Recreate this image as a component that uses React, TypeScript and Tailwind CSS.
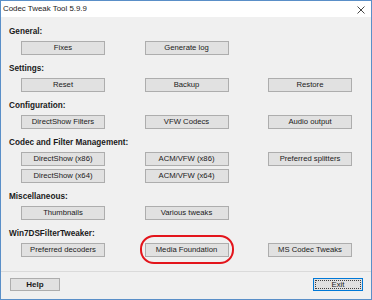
import React from 'react';

const font = { fontFamily: '"Liberation Sans", Arial, sans-serif' };

function Btn({ label, circled }: { label: string; circled?: boolean }) {
  return (
    <div className="relative">
      <div className="flex h-[14px] w-[84px] items-center justify-center border border-[#adadad] bg-[#e1e1e1] text-[7.7px] leading-none text-[#1a1a1a]">
        {label}
      </div>
      {circled && (
        <div className="pointer-events-none absolute -bottom-[7px] -left-[5px] -right-[5px] -top-[8px] rounded-[14px] border-2 border-[#e3141b]" />
      )}
    </div>
  );
}

function Section({ title, rows }: { title: string; rows: { label: string; circled?: boolean }[][] }) {
  return (
    <div className="mb-[7px]">
      <div className="h-[14px] text-[8.2px] font-bold leading-[14px] text-[#1a1a1a]">{title}</div>
      <div className="mt-[2px] flex flex-col gap-[3px] pl-[12px]">
        {rows.map((row, i) => (
          <div key={i} className="grid grid-cols-[84px_84px_84px] gap-x-[39.5px]">
            {row.map((b) => (
              <Btn key={b.label} label={b.label} circled={b.circled} />
            ))}
          </div>
        ))}
      </div>
    </div>
  );
}

const sections = [
  { title: 'General:', rows: [[{ label: 'Fixes' }, { label: 'Generate log' }]] },
  { title: 'Settings:', rows: [[{ label: 'Reset' }, { label: 'Backup' }, { label: 'Restore' }]] },
  {
    title: 'Configuration:',
    rows: [[{ label: 'DirectShow Filters' }, { label: 'VFW Codecs' }, { label: 'Audio output' }]],
  },
  {
    title: 'Codec and Filter Management:',
    rows: [
      [{ label: 'DirectShow  (x86)' }, { label: 'ACM/VFW  (x86)' }, { label: 'Preferred splitters' }],
      [{ label: 'DirectShow  (x64)' }, { label: 'ACM/VFW  (x64)' }],
    ],
  },
  { title: 'Miscellaneous:', rows: [[{ label: 'Thumbnails' }, { label: 'Various tweaks' }]] },
  {
    title: 'Win7DSFilterTweaker:',
    rows: [
      [
        { label: 'Preferred decoders' },
        { label: 'Media Foundation', circled: true },
        { label: 'MS Codec Tweaks' },
      ],
    ],
  },
];

export default function App() {
  return (
    <div className="flex h-[300px] w-[372px] flex-col border border-[#5a8fc8] bg-[#f0f0f0]" style={font}>
      {/* title bar */}
      <div className="flex h-[16px] items-center justify-between bg-white pl-[2px] pr-[6px]">
        <span className="text-[7.9px] text-[#1a1a1a]" style={{ whiteSpace: 'pre' }}>Codec Tweak Tool 5.9.9</span>
        <svg width="8" height="8" viewBox="0 0 8 8" className="mt-[1px]">
          <path d="M0.5 0.5L7.5 7.5M7.5 0.5L0.5 7.5" stroke="#333" strokeWidth="0.9" />
        </svg>
      </div>

      <div className="flex-1 pl-[8px] pt-[8px]">
        {sections.map((s) => (
          <Section key={s.title} title={s.title} rows={s.rows} />
        ))}
      </div>

      <div className="border-t border-[#dadada] shadow-[inset_0_1px_0_#ffffff]" />
      <div className="flex h-[27px] items-start justify-between pl-[9px] pr-[8px] pt-[6px]">
        <div className="flex h-[13px] w-[50px] items-center justify-center border border-[#adadad] bg-[#e1e1e1] text-[8px] font-bold leading-none text-[#1a1a1a]">
          Help
        </div>
        <div className="relative flex h-[13px] w-[50px] items-center justify-center border border-[#0078d7] bg-[#e1e1e1] text-[7.7px] leading-none text-[#1a1a1a]">
          <div className="absolute inset-[1px] border border-dotted border-[#404040]" />
          Exit
        </div>
      </div>
    </div>
  );
}
